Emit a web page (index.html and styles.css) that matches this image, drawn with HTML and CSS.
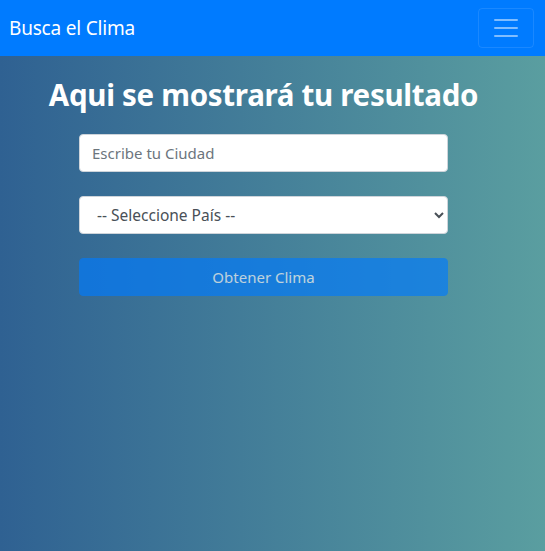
FILE: index.html
```html
<!DOCTYPE html>
<html lang="es">
<head>
<meta charset="utf-8">
<title>Busca el Clima</title>
<link rel="stylesheet" href="styles.css">
</head>
<body>
<nav class="navbar">
  <a class="brand" href="#">Busca el Clima</a>
  <button class="toggler" type="button" aria-label="Menu">
    <svg width="30" height="30" viewBox="0 0 30 30"><path stroke="rgba(255,255,255,0.5)" stroke-linecap="round" stroke-miterlimit="10" stroke-width="2" d="M4 7h22M4 15h22M4 23h22"/></svg>
  </button>
</nav>
<main class="page">
  <div class="content">
    <h1 class="title">Aqui se mostrará tu resultado</h1>
    <form class="form">
      <input class="field" type="text" placeholder="Escribe tu Ciudad">
      <select class="field select">
        <option>-- Seleccione País --</option>
      </select>
      <button class="btn" type="button" disabled>Obtener Clima</button>
    </form>
  </div>
</main>
</body>
</html>
```

FILE: styles.css
```css
* { box-sizing: border-box; }
html, body { margin: 0; height: 100%; }
body {
  font-family: "Noto Sans", "Open Sans", Arial, sans-serif;
  display: flex;
  flex-direction: column;
}
.navbar {
  height: 56px;
  background: #007bff;
  display: flex;
  align-items: center;
  justify-content: space-between;
  padding: 0 11px 0 9px;
  flex: none;
}
.brand {
  color: #fff;
  text-decoration: none;
  font-size: 19px;
  letter-spacing: -0.2px;
}
.toggler {
  width: 56px;
  height: 40px;
  background: transparent;
  border: 1px solid rgba(255,255,255,0.1);
  border-radius: 4px;
  display: flex;
  align-items: center;
  justify-content: center;
  padding: 0;
}
.page {
  flex: 1;
  background: linear-gradient(to right, #2f6192, #5a9ea0);
}
.content {
  display: flex;
  flex-direction: column;
  align-items: center;
  padding-right: 18px;
}
.title {
  margin: 21px 0 22px;
  color: #fff;
  font-size: 29.5px;
  font-weight: 700;
  line-height: 1.2;
  letter-spacing: -0.3px;
}
.form {
  width: 369px;
  display: flex;
  flex-direction: column;
  gap: 24px;
}
.field {
  height: 38px;
  width: 100%;
  border: 1px solid #ced4da;
  border-radius: 4px;
  background: #fff;
  padding: 0 12px;
  font-family: inherit;
  font-size: 15px;
  color: #495057;
}
.field::placeholder { color: #6c757d; }
.select { padding-left: 13px; font-size: 15.5px; }
.btn {
  height: 38px;
  width: 100%;
  border: 1px solid #007bff;
  border-radius: 4px;
  background: #007bff;
  color: #fff;
  font-family: inherit;
  font-size: 15px;
  opacity: 0.65;
}
```
